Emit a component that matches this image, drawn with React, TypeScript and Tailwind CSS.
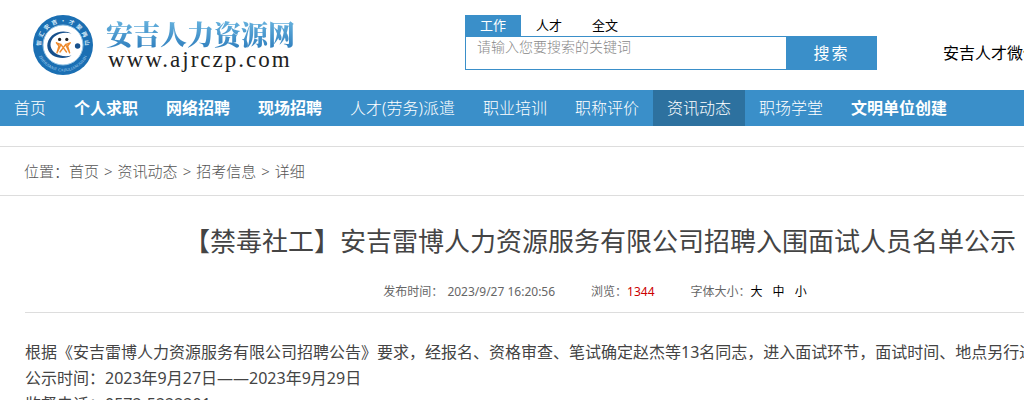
import { useState } from 'react';

const navItems = [
  { label: '首页' },
  { label: '个人求职', bold: true },
  { label: '网络招聘', bold: true },
  { label: '现场招聘', bold: true },
  { label: '人才(劳务)派遣' },
  { label: '职业培训' },
  { label: '职称评价' },
  { label: '资讯动态', active: true },
  { label: '职场学堂' },
  { label: '文明单位创建', bold: true },
];

const crumbs = ['首页', '资讯动态', '招考信息', '详细'];

function LogoMark() {
  return (
    <svg viewBox="0 0 60 60" className="size-[60px]" aria-hidden="true">
      <defs>
        <path id="arcTop" d="M10.5 40 A22 22 0 1 1 49.5 40" />
        <path id="arcBottom" d="M3.4 32 A26.7 26.7 0 0 0 56.6 32" />
      </defs>
      <circle cx="30" cy="30" r="30" fill="#1b6fb3" />
      <circle cx="30" cy="30" r="20" fill="#fff" stroke="#8fc0e2" strokeWidth="1" />
      <text fontSize="5.6" fontWeight="bold" fill="#d6ebf9" className="font-['Noto_Sans_CJK_SC',sans-serif]">
        <textPath href="#arcTop" startOffset="50%" textAnchor="middle">
          智 &nbsp;汇 &nbsp;安 &nbsp;吉 &nbsp;· &nbsp;才 &nbsp;聚 &nbsp;两 &nbsp;山
        </textPath>
      </text>
      <text fontSize="4" fill="#b9dcf3" className="font-['Liberation_Serif',serif]">
        <textPath href="#arcBottom" startOffset="50%" textAnchor="middle">
          ZHIHUIANJI &nbsp;CAIJULIANGSHAN
        </textPath>
      </text>
      <path
        d="M38.5 18.5 C33 15.2 24.5 15.8 19 20.5 C12.5 26.5 12.8 35.5 19.5 40.2 C25.5 44 34 43.6 38.5 40.5 C32.5 42 26 41 21.5 37.4 C16.3 33 16.3 26.5 21 22 C25.5 18 32.5 16.8 38.5 18.5 Z"
        fill="#17508c"
      />
      <circle cx="44.6" cy="31" r="2.7" fill="#17508c" />
      <circle cx="26.6" cy="24.4" r="1.6" fill="#222" />
      <circle cx="33.8" cy="24.4" r="1.6" fill="#222" />
      <path
        d="M23.4 27.8 L28 29.5 L33.5 37 M23.4 27.8 L26 31 L24 37.8 M28 29.5 L24 37.8 M37.2 27.8 L32.6 29.5 L27 37 M37.2 27.8 L34.6 31 L36.6 37.8 M32.6 29.5 L36.6 37.8"
        fill="none"
        stroke="#ee8a2c"
        strokeWidth="1.4"
        strokeLinecap="round"
      />
    </svg>
  );
}

function SearchBox() {
  const tabs = ['工作', '人才', '全文'];
  const [tab, setTab] = useState(tabs[0]);

  return (
    <form className="w-[412px]" onSubmit={(e) => e.preventDefault()}>
      <div className="flex">
        {tabs.map((t) => (
          <button
            key={t}
            type="button"
            onClick={() => setTab(t)}
            className={`h-[21px] w-14 text-[13px] leading-[21px] ${
              tab === t ? 'bg-[#3a8fc9] text-white' : 'text-black'
            }`}
          >
            {t}
          </button>
        ))}
      </div>
      <div className="flex h-[34px]">
        <input
          aria-label="搜索关键词"
          placeholder="请输入您要搜索的关键词"
          className="min-w-0 flex-1 border border-r-0 border-[#3a8fc9] pb-3 pl-[11px] text-sm leading-5 font-light outline-none placeholder:text-[#888]"
        />
        <button type="submit" className="w-[91px] bg-[#3a8fc9] text-base tracking-[2px] text-white">
          搜索
        </button>
      </div>
    </form>
  );
}

export default function App() {
  const [size, setSize] = useState('中');
  const bodySize = size === '大' ? 'text-lg' : size === '小' ? 'text-sm' : 'text-base';

  return (
    <div className="h-screen overflow-hidden bg-white font-['Noto_Sans','Noto_Sans_CJK_SC',sans-serif] text-[#444]">
      <div className="min-w-[1200px]">
        <header className="flex h-[90px] items-start pt-[15px] pl-[33px]">
          <a href="#" className="flex w-[432px] items-center gap-[13px]">
            <LogoMark />
            <span className="flex flex-col">
              <span className="bg-gradient-to-b from-[#68b4df] to-[#2f7fbe] bg-clip-text font-['Noto_Serif_CJK_SC','Noto_Sans_CJK_SC',serif] text-[27px] leading-[30px] font-black text-transparent">
                安吉人力资源网
              </span>
              <span className="pl-[2px] font-['Liberation_Serif',serif] text-[23px] leading-[22px] tracking-[2px] text-[#222]">
                www.ajrczp.com
              </span>
            </span>
          </a>
          <SearchBox />
          <p className="ml-[66px] pt-[26px] text-base text-black">安吉人才微信公众号</p>
        </header>

        <nav className="flex bg-[#3a8fc9] text-base leading-9 text-white">
          {navItems.map((item) => (
            <a
              key={item.label}
              href="#"
              className={`px-[14px] ${item.bold ? 'font-bold' : 'font-light'} ${item.active ? 'bg-[#2d719f]' : ''}`}
            >
              {item.label}
            </a>
          ))}
        </nav>

        <div className="mt-5 flex h-[50px] items-center border-y border-[#ddd] pl-6 text-[15px] font-light text-[#555]">
          <span>位置：</span>
          {crumbs.map((c, i) => (
            <span key={c}>
              {i > 0 && <span className="px-[5px]">&gt;</span>}
              <a href="#">{c}</a>
            </span>
          ))}
        </div>

        <article className="px-[25px]">
          <h1 className="pt-[25px] text-center text-[26px] leading-10">
            【禁毒社工】安吉雷博人力资源服务有限公司招聘入围面试人员名单公示
          </h1>
          <div className="flex h-[52px] items-center justify-center border-b border-[#ddd] pt-[10px] pr-[10px] text-xs text-[#666]">
            <span className="mr-9">
              发布时间：<span className="ml-1">2023/9/27 16:20:56</span>
            </span>
            <span className="mr-9">
              浏览：<span className="text-[#c00]">1344</span>
            </span>
            <span>字体大小：</span>
            <span className="flex gap-[10px] text-black">
              {['大', '中', '小'].map((s) => (
                <button key={s} onClick={() => setSize(s)}>
                  {s}
                </button>
              ))}
            </span>
          </div>
          <div className={`pt-[26px] leading-[26px] ${bodySize}`}>
            <p className="whitespace-nowrap">
              根据《安吉雷博人力资源服务有限公司招聘公告》要求，经报名、资格审查、笔试确定赵杰等13名同志，进入面试环节，面试时间、地点另行通知。
            </p>
            <p>公示时间：2023年9月27日——2023年9月29日</p>
            <p>监督电话：0572-5222201</p>
          </div>
        </article>
      </div>
    </div>
  );
}
